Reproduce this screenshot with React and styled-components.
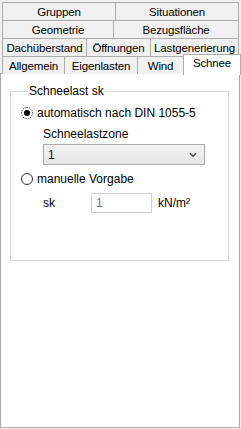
import React from "react";
import styled, { createGlobalStyle } from "styled-components";

const Global = createGlobalStyle`
  html, body { margin: 0; padding: 0; background: #f0f0f0; }
  body { font-family: "Liberation Sans", Arial, sans-serif; font-size: 12px; color: #000; }
  * { box-sizing: border-box; }
`;

const Window = styled.div`
  width: 241px;
  height: 429px;
  display: flex;
  flex-direction: column;
`;

const Strip = styled.div`
  display: flex;
  flex-direction: column;
  padding: 2px 0 0 2px;
`;

const Row = styled.div`
  display: flex;
  height: 18px;
`;

const Tab = styled.div`
  width: ${(p) => p.$w}px;
  height: ${(p) => (p.$sel ? 21 : 18)}px;
  margin-left: ${(p) => (p.$first ? 0 : -1)}px;
  margin-top: ${(p) => (p.$sel ? -2 : 0)}px;
  border: 1px solid #acacac;
  border-bottom: none;
  background: ${(p) => (p.$sel ? "#ffffff" : "#f0f0f0")};
  position: relative;
  z-index: ${(p) => (p.$sel ? 2 : 1)};
  text-align: center;
  padding-top: ${(p) => (p.$sel ? 0 : 1)}px;
  line-height: 16px;
  white-space: nowrap;
  font-size: 11.5px;
  letter-spacing: -0.15px;
`;

const Panel = styled.div`
  margin-top: -1px;
  width: 240px;
  height: 355px;
  background: #ffffff;
  border: 1px solid #acacac;
  padding: 10px 10px 0 9px;
`;

const Group = styled.fieldset`
  margin: 0;
  padding: 7px 0 47px 10px;
  border: 1px solid #dcdcdc;
  min-width: 0;
  display: flex;
  flex-direction: column;
`;

const Legend = styled.legend`
  padding: 0 1px;
  margin-left: 7px;
  line-height: 14px;
  font-size: 12px;
`;

const RadioRow = styled.div`
  display: flex;
  align-items: center;
  height: 16px;
  margin-top: ${(p) => p.$mt || 0}px;
  gap: 4px;
`;

const RadioCircle = styled.span`
  width: 12px;
  height: 12px;
  border-radius: 50%;
  border: 1px ${(p) => (p.$checked ? "dotted #222" : "solid #333")};
  background: #fff;
  display: flex;
  align-items: center;
  justify-content: center;
  flex: none;
  &::after {
    content: "";
    display: ${(p) => (p.$checked ? "block" : "none")};
    width: 6px;
    height: 6px;
    border-radius: 50%;
    background: #000;
  }
`;

const SubLabel = styled.div`
  margin: 5px 0 0 22px;
  line-height: 16px;
`;

const Select = styled.div`
  margin: 2px 0 0 22px;
  width: 162px;
  height: 21px;
  border: 1px solid #acacac;
  background: linear-gradient(#f2f2f2, #e5e5e5);
  display: flex;
  align-items: center;
  justify-content: space-between;
  padding: 0 7px 0 4px;
`;

const InputRow = styled.div`
  display: flex;
  align-items: center;
  margin: 6px 0 0 22px;
  height: 20px;
`;

const InputLabel = styled.span`
  width: 48px;
`;

const Input = styled.div`
  width: 61px;
  height: 20px;
  border: 1px solid #d0d0d0;
  background: #fff;
  color: #7b6b8d;
  padding: 0 0 0 4px;
  line-height: 18px;
`;

const Unit = styled.span`
  margin-left: 6px;
`;

const rows = [
  [["Gruppen", 114], ["Situationen", 124]],
  [["Geometrie", 112], ["Bezugsfläche", 126]],
  [["Dachüberstand", 85], ["Öffnungen", 65], ["Lastgenerierung", 89]],
  [["Allgemein", 63], ["Eigenlasten", 74], ["Wind", 47], ["Schnee", 58, true]],
];

export default function App() {
  return (
    <>
      <Global />
      <Window>
        <Strip>
          {rows.map((r, i) => (
            <Row key={i}>
              {r.map(([t, w, sel], j) => (
                <Tab key={t} $w={w} $first={j === 0} $sel={sel}>
                  {t}
                </Tab>
              ))}
            </Row>
          ))}
        </Strip>
        <Panel>
          <Group>
            <Legend>Schneelast sk</Legend>
            <RadioRow>
              <RadioCircle $checked />
              <span>automatisch nach DIN 1055-5</span>
            </RadioRow>
            <SubLabel>Schneelastzone</SubLabel>
            <Select>
              <span>1</span>
              <svg width="8" height="6" viewBox="0 0 8 6">
                <path d="M1 1.2 L4 4.2 L7 1.2" fill="none" stroke="#444" strokeWidth="1.4" />
              </svg>
            </Select>
            <RadioRow $mt={6}>
              <RadioCircle />
              <span>manuelle Vorgabe</span>
            </RadioRow>
            <InputRow>
              <InputLabel>sk</InputLabel>
              <Input>1</Input>
              <Unit>kN/m²</Unit>
            </InputRow>
          </Group>
        </Panel>
      </Window>
    </>
  );
}
